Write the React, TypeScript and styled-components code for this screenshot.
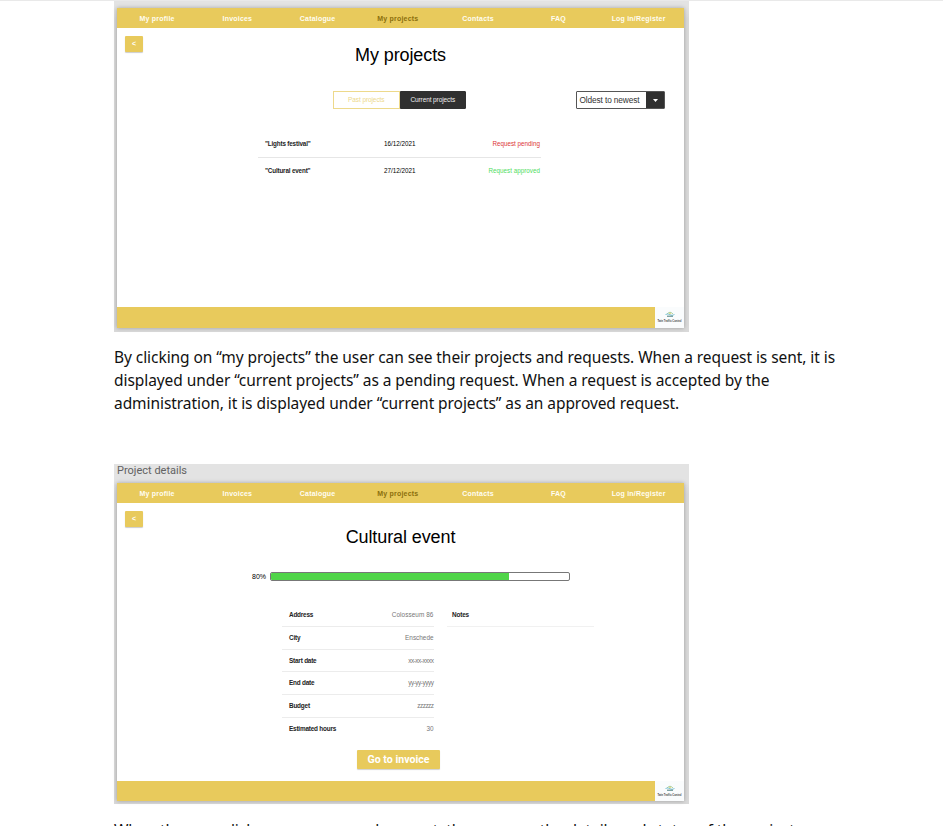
import React from "react";
import styled, { createGlobalStyle } from "styled-components";

const GlobalStyle = createGlobalStyle`
  * { box-sizing: border-box; }
  html, body { margin: 0; background: #fff; overflow: hidden; }
`;

const Page = styled.main`
  width: 943px;
  height: 826px;
  overflow: hidden;
  border-top: 1px solid #e9e9e9;
  font-family: "Liberation Sans", Arial, sans-serif;
  color: #000;
`;

const Frame = styled.section<{ $offset: number; $height: number }>`
  width: 575px;
  height: ${(p) => p.$height}px;
  margin: ${(p) => p.$offset}px 0 0 114px;
  padding: 0 5px 0 3px;
  background: linear-gradient(#e3e3e3 18px, #d9d9d9 30px);
`;

const FrameLabel = styled.div`
  height: 19px;
  font: 11px/14px Roboto, sans-serif;
  color: #626262;
`;

const Card = styled.div<{ $height: number }>`
  display: flex;
  flex-direction: column;
  height: ${(p) => p.$height}px;
  background: #fff;
  box-shadow: 0 0 4px rgba(0, 0, 0, 0.28);
`;

const Nav = styled.nav`
  display: grid;
  grid-template-columns: repeat(7, 80.25px);
  height: 20px;
  flex: none;
  background: #e8ca5c;
`;

const NavItem = styled.a<{ $active?: boolean }>`
  text-align: center;
  white-space: nowrap;
  font-size: 7px;
  line-height: 21px;
  font-weight: bold;
  letter-spacing: 0.2px;
  color: ${(p) => (p.$active ? "#8b6f0c" : "#fffdf2")};
`;

const BackButton = styled.button`
  width: 18px;
  height: 16px;
  margin: 8px 0 0 8px;
  padding: 0;
  flex: none;
  border: 0;
  border-radius: 1px;
  background: #e8ca5c;
  box-shadow: 0 1px 1px rgba(0, 0, 0, 0.2);
  color: #fff;
  font: bold 7px/16px "Liberation Sans", sans-serif;
`;

const Heading = styled.h1<{ $top: number }>`
  margin: ${(p) => p.$top}px 0 0;
  height: 22px;
  font-size: 18px;
  line-height: 22px;
  font-weight: normal;
  letter-spacing: -0.1px;
  text-align: center;
`;

const Toolbar = styled.div`
  display: flex;
  margin: 25px 19px 0 216px;
  height: 18px;
  justify-content: space-between;
`;

const Tabs = styled.div`
  display: flex;
  width: 133px;
`;

const Tab = styled.button<{ $active?: boolean }>`
  flex: 1;
  padding: 0;
  border: 1px solid ${(p) => (p.$active ? "#303030" : "#edd98b")};
  border-radius: ${(p) => (p.$active ? "0 1px 1px 0" : "0")};
  background: ${(p) => (p.$active ? "#303030" : "#fff")};
  color: ${(p) => (p.$active ? "#eee" : "#edd98b")};
  font: 6.5px/16px "Liberation Sans", sans-serif;
  letter-spacing: -0.1px;
`;

const Select = styled.div`
  display: flex;
  width: 89px;
  border: 1px solid #555;
  border-radius: 1px;
  font-size: 8.3px;
  line-height: 16px;
  letter-spacing: -0.12px;
  color: #333;
  white-space: nowrap;
`;

const SelectValue = styled.span`
  flex: 1;
  padding-left: 2.5px;
`;

const SelectArrow = styled.span`
  display: grid;
  place-items: center;
  width: 18px;
  background: #303030;
`;

const Projects = styled.div`
  width: 283px;
  margin: 21.5px 0 0 141px;
`;

const ProjectRow = styled.div`
  display: grid;
  grid-template-columns: 101px 1fr 110px;
  height: 26px;
  padding: 0 1px 0 7px;
  font-size: 6.3px;
  line-height: 26px;
  & + & { border-top: 1px solid #e6e6e6; }
`;

const ProjectName = styled.span`
  font-weight: bold;
  letter-spacing: -0.16px;
  color: #1c1c1c;
`;

const ProjectDate = styled.span`
  padding-left: 18px;
`;

const Status = styled.span<{ $approved?: boolean }>`
  text-align: right;
  color: ${(p) => (p.$approved ? "#4fdd62" : "#dc3535")};
`;

const Footer = styled.footer<{ $height: number }>`
  display: flex;
  justify-content: flex-end;
  flex: none;
  height: ${(p) => p.$height}px;
  margin-top: auto;
  background: #e8ca5c;
`;

const Brand = styled.div`
  display: flex;
  flex-direction: column;
  align-items: center;
  width: 29px;
  padding-top: 3px;
  background: #fafcfd;
  font-size: 2.6px;
  line-height: 6px;
  color: #444;
  white-space: nowrap;
  font-weight: bold;
`;

const Paragraph = styled.p<{ $top: number }>`
  margin: ${(p) => p.$top}px 0 0 114px;
  font: 15.5px/23px "Noto Sans", sans-serif;
  color: #111;
`;

const TextLine = styled.span`
  display: block;
  white-space: nowrap;
  letter-spacing: -0.067px;
`;

const Progress = styled.div`
  display: flex;
  align-items: center;
  gap: 4px;
  margin: 23px 0 0 135px;
  height: 10px;
  font-size: 7px;
`;

const Track = styled.div`
  width: 300px;
  height: 9px;
  border: 1px solid #777;
  border-radius: 2px;
  overflow: hidden;
`;

const Bar = styled.div`
  height: 100%;
  background: #50d549;
`;

const Details = styled.div`
  display: flex;
  align-items: flex-start;
  gap: 13px;
  margin: 23.4px 0 0 165px;
`;

const Fields = styled.dl`
  width: 152px;
  margin: 0;
`;

const Field = styled.div`
  display: flex;
  justify-content: space-between;
  height: 22.7px;
  padding: 0 0 0 7px;
  font-size: 6.4px;
  line-height: 22px;
  border-bottom: 1px solid #ececec;
  &:last-child { border-bottom: 0; }
`;

const FieldName = styled.dt`
  font-weight: bold;
  letter-spacing: -0.2px;
  color: #222;
`;

const FieldValue = styled.dd<{ $tracking: number }>`
  margin: 0;
  padding-right: 0.5px;
  color: #777;
  letter-spacing: ${(p) => p.$tracking}px;
`;

const Notes = styled.div`
  width: 147px;
  height: 22.7px;
  padding-left: 5px;
  border-bottom: 1px solid #f1f1f1;
  font: bold 6.4px/22px "Liberation Sans", sans-serif;
  letter-spacing: -0.15px;
  color: #222;
`;

const InvoiceButton = styled.button`
  width: 83px;
  height: 19px;
  margin: 9px 0 0 240px;
  padding: 0;
  border: 0;
  border-radius: 1px;
  background: #e8ca5c;
  box-shadow: 0 1px 1px rgba(0, 0, 0, 0.18);
  color: #fff;
  font: bold 10.6px/19px Roboto, sans-serif;
`;

const navItems = ["My profile", "Invoices", "Catalogue", "My projects", "Contacts", "FAQ", "Log in/Register"];

const fields: [string, string, number][] = [
  ["Address", "Colosseum 86", 0.08],
  ["City", "Enschede", 0],
  ["Start date", "xx-xx-xxxx", -0.45],
  ["End date", "yy-yy-yyyy", -0.45],
  ["Budget", "zzzzzz", -0.5],
  ["Estimated hours", "30", 0],
];

function TopNav() {
  return (
    <Nav>
      {navItems.map((item) => (
        <NavItem key={item} $active={item === "My projects"}>{item}</NavItem>
      ))}
    </Nav>
  );
}

function BottomBar({ height }: { height: number }) {
  return (
    <Footer $height={height}>
      <Brand>
        <svg width="10" height="9" viewBox="0 0 10 9">
          <path d="M2 4 Q5 0.5 8 4" fill="none" stroke="#a9cf9f" strokeWidth="1" />
          <path d="M3.5 4 Q5 2 6.5 4Z" fill="#ecd96d" />
          <path d="M0.5 4.5 Q3 3.2 5 4.7 T9.5 4.5" fill="none" stroke="#75bfd2" strokeWidth="0.9" />
          <path d="M2 6.2H8" stroke="#477c7b" strokeWidth="1" />
        </svg>
        <span>Twin Traffic Control</span>
      </Brand>
    </Footer>
  );
}

export default function App() {
  const progress = 80;
  return (
    <Page>
      <GlobalStyle />
      <Frame $offset={-12} $height={343}>
        <FrameLabel>My projects</FrameLabel>
        <Card $height={320}>
          <TopNav />
          <BackButton>&lt;</BackButton>
          <Heading $top={-8}>My projects</Heading>
          <Toolbar>
            <Tabs>
              <Tab>Past projects</Tab>
              <Tab $active>Current projects</Tab>
            </Tabs>
            <Select>
              <SelectValue>Oldest to newest</SelectValue>
              <SelectArrow>
                <svg width="5" height="3" viewBox="0 0 5 3"><path d="M0 0H5L2.5 3Z" fill="#fff" /></svg>
              </SelectArrow>
            </Select>
          </Toolbar>
          <Projects>
            <ProjectRow>
              <ProjectName>"Lights festival"</ProjectName>
              <ProjectDate>16/12/2021</ProjectDate>
              <Status>Request pending</Status>
            </ProjectRow>
            <ProjectRow>
              <ProjectName>"Cultural event"</ProjectName>
              <ProjectDate>27/12/2021</ProjectDate>
              <Status $approved>Request approved</Status>
            </ProjectRow>
          </Projects>
          <BottomBar height={21} />
        </Card>
      </Frame>
      <Paragraph $top={14}>
        <TextLine>By clicking on “my projects” the user can see their projects and requests. When a request is sent, it is</TextLine>
        <TextLine>displayed under “current projects” as a pending request. When a request is accepted by the</TextLine>
        <TextLine>administration, it is displayed under “current projects” as an approved request.</TextLine>
      </Paragraph>
      <Frame $offset={49} $height={340}>
        <FrameLabel>Project details</FrameLabel>
        <Card $height={318}>
          <TopNav />
          <BackButton>&lt;</BackButton>
          <Heading $top={-1}>Cultural event</Heading>
          <Progress>
            <span>80%</span>
            <Track><Bar style={{ width: `${progress}%` }} /></Track>
          </Progress>
          <Details>
            <Fields>
              {fields.map(([name, value, tracking]) => (
                <Field key={name}>
                  <FieldName>{name}</FieldName>
                  <FieldValue $tracking={tracking}>{value}</FieldValue>
                </Field>
              ))}
            </Fields>
            <Notes>Notes</Notes>
          </Details>
          <InvoiceButton>Go to invoice</InvoiceButton>
          <BottomBar height={20} />
        </Card>
      </Frame>
      <Paragraph $top={15}>
        <TextLine>When the user clicks on an approved request, they can see the details and status of the project.</TextLine>
      </Paragraph>
    </Page>
  );
}
